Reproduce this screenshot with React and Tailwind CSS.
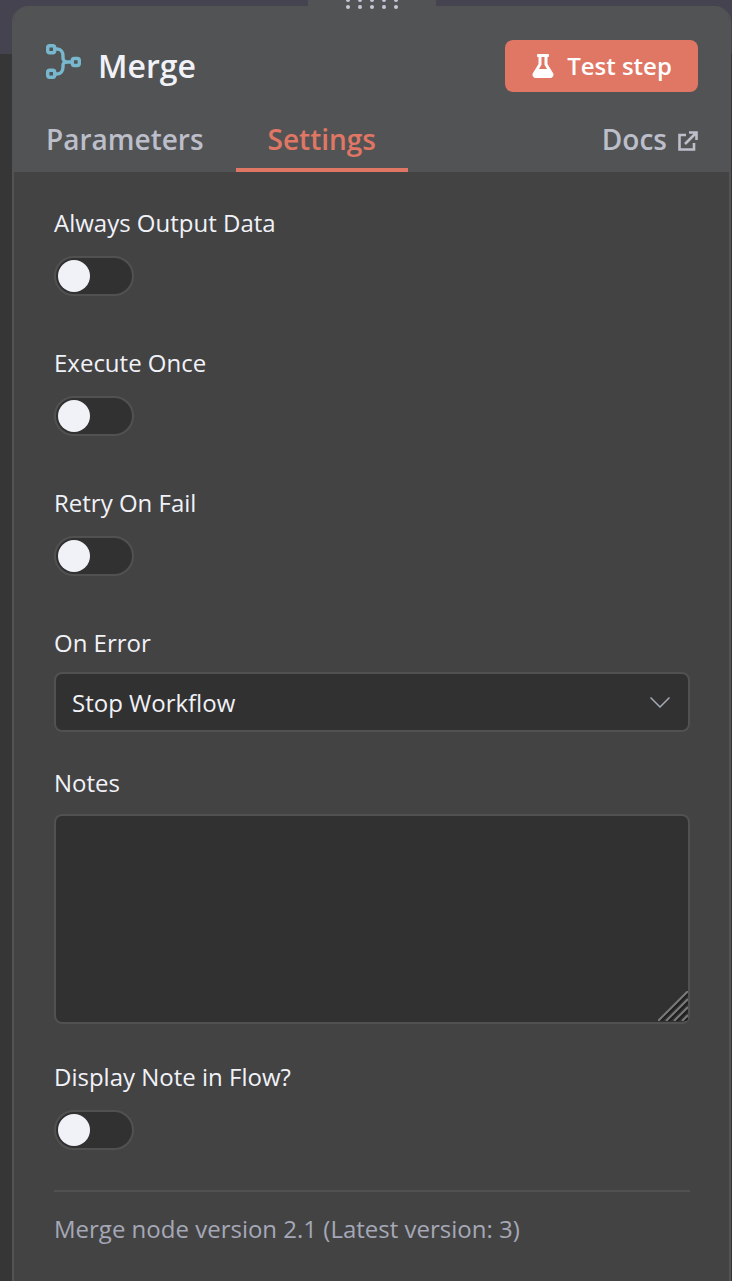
import React from "react";
import { FaFlask } from "react-icons/fa";

const MergeIcon = () => (
  <svg width="36" height="36" viewBox="0 0 36 36" fill="none" stroke="#78b8ce" strokeWidth="3.4" className="mb-[8px]">
    <rect x="1.7" y="1.7" width="7" height="7" rx="2" />
    <rect x="1.7" y="26.3" width="7" height="7" rx="2" />
    <rect x="26.3" y="14.5" width="7" height="7" rx="2" />
    <path d="M9 5h2c4 0 6 3 6 7v2c0 3 2 4 5 4h5M9 30h2c4 0 6-3 6-7v-2c0-2 2-3 5-3" />
  </svg>
);

const ExternalIcon = () => (
  <svg width="20" height="20" viewBox="0 0 20 20" fill="none" stroke="#bcbfca" strokeWidth="2.6" className="mt-[4px]">
    <path d="M8 4H1.5v14.5H16V12" />
    <path d="M7 13L18 2M11 1.5h7.5V9" />
  </svg>
);

const Chevron = () => (
  <svg width="20" height="11" viewBox="0 0 20 11" fill="none" stroke="#a5a8b6" strokeWidth="1.5">
    <path d="M0.5 0.5L10 10L19.5 0.5" />
  </svg>
);

const Toggle = () => (
  <div className="w-20 h-10 rounded-full bg-[#313131] border-2 border-[#515151] flex items-center pl-[2px]">
    <div className="w-8 h-8 rounded-full bg-[#f1f2f8]" />
  </div>
);

const Label = ({ children, mb = "mb-[17px]" }) => (
  <div className={`text-[24px] leading-[32px] text-[#f1f2f8] ${mb}`}>{children}</div>
);

const DotRow = () => (
  <div className="flex gap-[8px]">
    {[0, 1, 2, 3, 4].map((i) => (
      <div key={i} className="w-1 h-1 rounded-full bg-[#c4c8d6] shrink-0" />
    ))}
  </div>
);

export default function App() {
  return (
    <div
      className="relative w-[732px] h-[1281px] overflow-hidden pt-[6px] pl-[12px] bg-[linear-gradient(#45434f_54px,#363636_54px)]"
      style={{ fontFamily: '"Open Sans", sans-serif' }}
    >
      {/* agarre de arrastre */}
      <div className="absolute top-0 left-[308px] w-[128px] h-[10px] bg-[#525355] flex flex-col items-center gap-[3px] overflow-hidden">
        <div className="-mt-[2px]">
          <DotRow />
        </div>
        <DotRow />
      </div>

      <div className="w-[719px] h-[1300px] rounded-t-[16px] border-l-2 border-r-2 border-[#525355] bg-[#434344] overflow-hidden">
        <div className="bg-[#525355] h-[166px] flex flex-col">
          <div className="flex items-center justify-between pt-[34px] pl-[32px] pr-[31px] h-[86px]">
            <div className="flex items-center gap-[17px]">
              <MergeIcon />
              <span className="text-[32px] leading-[40px] font-semibold text-[#f1f2f8] -ml-[1px]">Merge</span>
            </div>
            <button className="w-[193px] h-[52px] rounded-[8px] bg-[#e07664] text-white text-[24px] font-semibold flex items-center justify-center gap-[12px]">
              <FaFlask size={24} />
              Test step
            </button>
          </div>
          <div className="flex items-end flex-1 pl-[32px] pr-[31px]">
            <div className="text-[28px] leading-[38px] font-semibold text-[#bcbfca] pb-[14px] pr-[32px]">Parameters</div>
            <div className="text-[28px] leading-[38px] font-semibold text-[#e07664] px-[32px] pb-[10px] border-b-4 border-[#e07664]">Settings</div>
            <div className="ml-auto text-[28px] leading-[38px] font-semibold text-[#bcbfca] pb-[14px] flex items-center gap-[11px]">
              Docs
              <ExternalIcon />
            </div>
          </div>
        </div>

        <div className="pl-[40px] pr-[39px] pt-[35px]">
          <div className="h-[140px]">
            <Label>Always Output Data</Label>
            <Toggle />
          </div>
          <div className="h-[140px]">
            <Label>Execute Once</Label>
            <Toggle />
          </div>
          <div className="h-[140px]">
            <Label>Retry On Fail</Label>
            <Toggle />
          </div>
          <div className="h-[140px]">
            <Label mb="mb-[13px]">On Error</Label>
            <div className="h-[60px] rounded-[8px] bg-[#313131] border-2 border-[#515151] flex items-center justify-between pl-[16px] pr-[18px] text-[24px] text-[#f1f2f8]">
              <span className="mt-[2px]">Stop Workflow</span>
              <Chevron />
            </div>
          </div>
          <div className="h-[294px]">
            <Label mb="mb-[15px]">Notes</Label>
            <div className="relative h-[210px] rounded-[8px] bg-[#313131] border-2 border-[#515151]">
              <svg className="absolute right-0 bottom-[1px]" width="30" height="30" viewBox="0 0 30 30" fill="none" strokeWidth="2">
                <path stroke="#1f1f1f" d="M3 30L30 3M11 30L30 11M19 30L30 19M27 30L30 27" />
                <path stroke="#7a7a7a" d="M0 30L30 0M8 30L30 8M16 30L30 16M24 30L30 24" />
              </svg>
            </div>
          </div>
          <div className="h-[129px]">
            <Label>Display Note in Flow?</Label>
            <Toggle />
          </div>
          <div className="border-t-2 border-[#515151] pt-[21px] text-[24px] leading-[32px] text-[#a5a8b6]">
            Merge node version 2.1 (Latest version: 3)
          </div>
        </div>
      </div>
    </div>
  );
}
